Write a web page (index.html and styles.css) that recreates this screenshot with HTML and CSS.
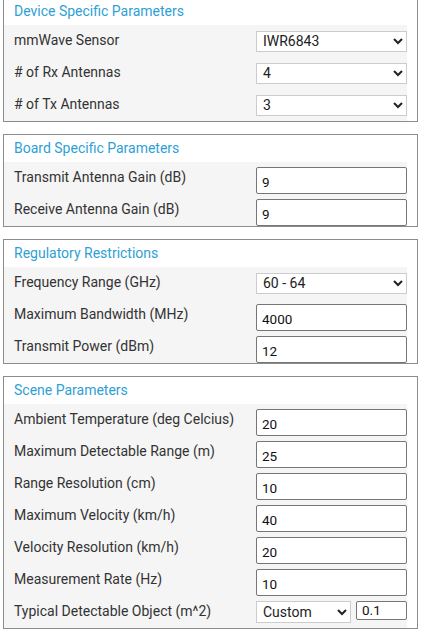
FILE: index.html
```html
<!DOCTYPE html>
<html lang="en">

<head>
    <meta charset="UTF-8">
    <meta name="viewport" content="width=device-width, initial-scale=1.0">
    <title>Sensing Estimator</title>
    <link rel="stylesheet" href="styles.css">
</head>

<body>
    <div class="page">

        <!-- device -->
        <section class="panel">
            <div class="panel-title">Device Specific Parameters</div>
            <div class="panel-body">
                <div class="row">
                    <label for="sensor">mmWave Sensor</label>
                    <select id="sensor" class="sel">
                        <option>IWR6843</option>
                        <option>IWR1443</option>
                        <option>IWR1642</option>
                    </select>
                </div>
                <div class="row">
                    <label for="rx"># of Rx Antennas</label>
                    <select id="rx" class="sel">
                        <option>4</option>
                        <option>3</option>
                        <option>2</option>
                        <option>1</option>
                    </select>
                </div>
                <div class="row">
                    <label for="tx"># of Tx Antennas</label>
                    <select id="tx" class="sel">
                        <option>3</option>
                        <option>2</option>
                        <option>1</option>
                    </select>
                </div>
            </div>
        </section>

        <!-- board -->
        <section class="panel">
            <div class="panel-title">Board Specific Parameters</div>
            <div class="panel-body">
                <div class="row">
                    <label for="txGain">Transmit Antenna Gain (dB)</label>
                    <input type="text" id="txGain" class="num" value="9">
                </div>
                <div class="row">
                    <label for="rxGain">Receive Antenna Gain (dB)</label>
                    <input type="text" id="rxGain" class="num" value="9">
                </div>
            </div>
        </section>

        <!-- regulatory -->
        <section class="panel">
            <div class="panel-title">Regulatory Restrictions</div>
            <div class="panel-body">
                <div class="row">
                    <label for="freq">Frequency Range (GHz)</label>
                    <select id="freq" class="sel">
                        <option>60 - 64</option>
                        <option>76 - 77</option>
                        <option>77 - 81</option>
                    </select>
                </div>
                <div class="row">
                    <label for="bw">Maximum Bandwidth (MHz)</label>
                    <input type="text" id="bw" class="num" value="4000">
                </div>
                <div class="row">
                    <label for="power">Transmit Power (dBm)</label>
                    <input type="text" id="power" class="num" value="12">
                </div>
            </div>
        </section>

        <!-- scene -->
        <section class="panel">
            <div class="panel-title">Scene Parameters</div>
            <div class="panel-body">
                <div class="row">
                    <label for="temp">Ambient Temperature (deg Celcius)</label>
                    <input type="text" id="temp" class="num" value="20">
                </div>
                <div class="row">
                    <label for="maxRange">Maximum Detectable Range (m)</label>
                    <input type="text" id="maxRange" class="num" value="25">
                </div>
                <div class="row">
                    <label for="rangeRes">Range Resolution (cm)</label>
                    <input type="text" id="rangeRes" class="num" value="10">
                </div>
                <div class="row">
                    <label for="maxVel">Maximum Velocity (km/h)</label>
                    <input type="text" id="maxVel" class="num" value="40">
                </div>
                <div class="row">
                    <label for="velRes">Velocity Resolution (km/h)</label>
                    <input type="text" id="velRes" class="num" value="20">
                </div>
                <div class="row">
                    <label for="rate">Measurement Rate (Hz)</label>
                    <input type="text" id="rate" class="num" value="10">
                </div>
                <div class="row">
                    <label for="object">Typical Detectable Object (m^2)</label>
                    <div class="combo">
                        <select id="object" class="sel sel-small">
                            <option>Custom</option>
                            <option>Human</option>
                            <option>Car</option>
                        </select>
                        <input type="text" class="num-small" value="0.1">
                    </div>
                </div>
            </div>
        </section>

    </div>
</body>

</html>
```

FILE: styles.css
```css
body {
    margin: 0;
    padding: 0;
    background-color: white;
    font-family: Roboto, "Liberation Sans", Arial, sans-serif;
}

.page {
    margin-top: -3px;
    padding: 0 4px 0 3px;
}

.panel {
    border: 1px solid #8c8c8c;
    background-color: white;
    margin-bottom: 12px;
}

.panel-title {
    height: 27px;
    line-height: 27px;
    padding-left: 10px;
    font-size: 14px;
    color: #2e9fd5;
}

.panel-body {
    background-color: #f5f5f5;
    margin-right: 10px;
    padding-left: 10px;
}

.row {
    display: flex;
    align-items: flex-start;
    height: 32px;
}

.row label {
    flex: 1;
    font-size: 14px;
    color: #333;
    line-height: 30px;
}

.sel {
    align-self: center;
    width: 151px;
    height: 21px;
    border: 1px solid #cccccc;
    border-radius: 0;
    background-color: white;
    font-family: Roboto, "Liberation Sans", Arial, sans-serif;
    font-size: 14px;
    color: #222;
    padding: 0 0 0 2px;
    box-sizing: border-box;
}

.num {
    margin-top: 5px;
    width: 151px;
    height: 27px;
    box-sizing: border-box;
    border: 1px solid #767676;
    border-radius: 2px;
    padding: 2px 5px 0;
    font-family: Roboto, "Liberation Sans", Arial, sans-serif;
    font-size: 13.5px;
    color: #111;
    background-color: white;
}

.combo {
    display: flex;
    align-items: flex-start;
    gap: 5px;
    margin-top: 5px;
}

.sel-small {
    width: 95px;
    height: 22px;
}

.num-small {
    width: 51px;
    height: 19px;
    box-sizing: border-box;
    border: 1px solid #767676;
    border-radius: 2px;
    padding: 0 5px 2px;
    font-family: Roboto, "Liberation Sans", Arial, sans-serif;
    font-size: 13.5px;
    color: #111;
    background-color: white;
}
```
